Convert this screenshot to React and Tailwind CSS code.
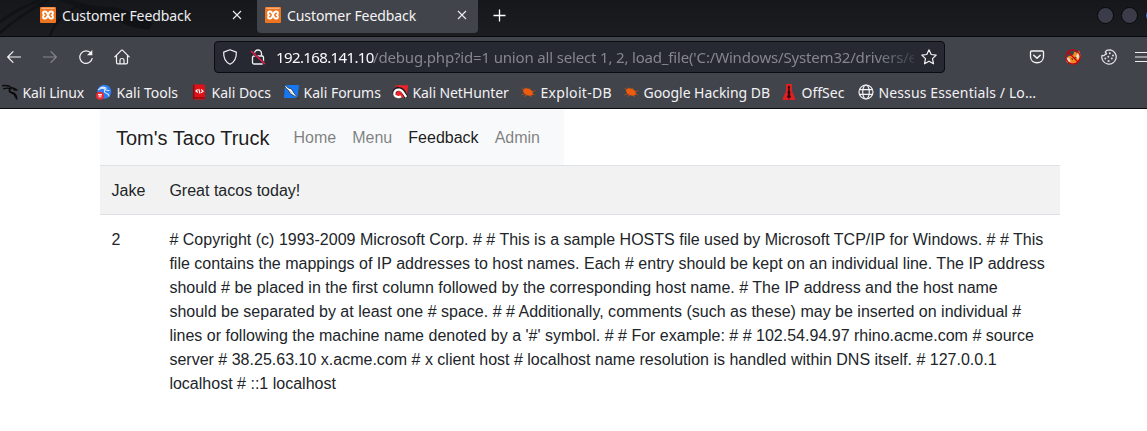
import React from "react";

const CHROME = "font-['Noto_Sans',sans-serif]";

function XamppIcon() {
  return (
    <svg width="16" height="16" viewBox="0 0 16 16" className="shrink-0">
      <rect width="16" height="16" rx="1" fill="#ee7420" />
      <path d="M1.500 1.200h13" stroke="#fbd0ad" strokeWidth=".9" />
      <path
        d="M6.700 5.400C5.500 3.900 3 4.200 3 6.100Q3 7.400 4.300 8 3 8.600 3 9.900c0 1.900 2.500 2.200 3.700.7L9.300 5.400C10.500 3.900 13 4.200 13 6.100q0 1.300-1.300 1.900Q13 8.600 13 9.900c0 1.900-2.500 2.200-3.700.7z"
        fill="none"
        stroke="#fff"
        strokeWidth="1.900"
        strokeLinejoin="round"
      />
    </svg>
  );
}

function CloseIcon() {
  return (
    <svg width="10" height="10" viewBox="0 0 10 10" fill="none" stroke="#eeeeef" strokeWidth="1.100">
      <path d="M1 1l8 8M9 1L1 9" />
    </svg>
  );
}

function KaliIcon() {
  return (
    <svg width="16" height="16" viewBox="0 0 16 16" className="shrink-0" fill="none" stroke="#0b0b0d" strokeLinecap="round" strokeLinejoin="round">
      <path d="M.6 1.800C4 1.200 7.200 1.700 9.500 3.800l3 .7 2.500 1.600-3.300-.3" strokeWidth="1.400" />
      <path d="M1.500 4.800C4.500 3.800 7 4 8.800 5" strokeWidth="1.100" />
      <path d="M9 4C6.500 5.800 7 8 9.800 8.700c2.800.6 4.500 2 4.800 6" strokeWidth="1.800" />
      <path d="M10 9.500c2 .5 3 2 3 3.500" strokeWidth="1" />
    </svg>
  );
}

function ToolsIcon() {
  return (
    <svg width="16" height="16" viewBox="0 0 16 16" className="shrink-0">
      <circle cx="8.300" cy="7.700" r="7" fill="#2c7ef5" />
      <path d="M2 6C5 3.500 8 4 10 6l3.500.8M9 5.500C7.500 8 9 9 11 9.500c1.500.5 2 1.500 2 3M4 4c3-1.500 5-1 6.500.5" fill="none" stroke="#d8e8ff" strokeWidth="1.100" />
      <circle cx="4" cy="11.800" r="4" fill="#ed2a32" />
      <path d="M2 10.500h4M3.200 10.500v3M4.900 10.500v3" stroke="#fff" strokeWidth=".9" />
    </svg>
  );
}

function DocsIcon() {
  return (
    <svg width="16" height="16" viewBox="0 0 16 16" className="shrink-0">
      <rect x="2" y=".5" width="12" height="15" rx=".8" fill="#dd1117" />
      <path d="M2.700 .8v14.500M2 13.800h12" stroke="#83070b" strokeWidth="1.200" />
      <path d="M6.700 5.500L4.900 7l2 1.500M10.100 5.500l2 1.700-2 1.500M7.800 5l1.200 4.500" fill="none" stroke="#fff" strokeWidth="1.100" />
    </svg>
  );
}

function ForumsIcon() {
  return (
    <svg width="16" height="16" viewBox="0 0 16 16" className="shrink-0">
      <path d="M2 1h14l-1.500 13H1z" fill="#1677f2" />
      <path d="M.3.800l3 1.400L5.500 4l3 1 2.500 4 4.500 5.800-4.800-3.300-3.700-2-1.500-3-2-1.800z" fill="#fff" stroke="#16202d" strokeWidth=".7" />
      <path d="M6 6.500l3 3" stroke="#777" strokeWidth=".7" />
    </svg>
  );
}

function NetHunterIcon() {
  return (
    <svg width="16" height="16" viewBox="0 0 16 16" className="shrink-0">
      <path d="M3.500 1.200H16L14.500 13.500H4z" fill="#ed252b" />
      <path d="M2.200 9.500C2.300 5 7.500 3.500 10.500 6.500c1.800 1.800 2.300 4.500 3.800 7" fill="none" stroke="#25181b" strokeWidth="4" />
      <path d="M9 12.300c-2 1.400-5.800 1-6.600-1.800C1.800 7.300 4.500 5.200 7.300 5.600c3.700.5 4.200 4.200 7 7.400" fill="none" stroke="#fff" strokeWidth="2.300" />
      <path d="M4 3.500L6 2.800" stroke="#211b1d" strokeWidth="1.300" />
    </svg>
  );
}

function ExploitIcon() {
  return (
    <svg width="16" height="16" viewBox="0 0 16 16" className="shrink-0">
      <ellipse cx="8" cy="8" rx="5.300" ry="3.300" transform="rotate(25 8 8)" fill="#ef5b0c" />
      <path d="M4 6L1.500 4.300M6 5L5 3.500M9.500 5l1-1.200M12 7.500l3.500-.7M12.500 10l2.500 1M10 11.500l2 1.300M5 9.500L1.500 11M7 11l-3 1.500" stroke="#c9540f" strokeWidth=".7" />
    </svg>
  );
}

function OffSecIcon() {
  return (
    <svg width="16" height="16" viewBox="0 0 16 16" className="shrink-0">
      <path d="M5 0h6v7l3.200 7.500L14 16H2l-.2-1.500L5 7z" fill="#df2022" />
      <path d="M8 1.500c1.500 1 1 2.500.4 3.500L9.500 9 8.700 10l1.500 3.500-2 .2V16h-.6v-2.300l-1.800-.2L7.200 10l-.7-1L7.400 5C6.500 4 6.500 2.500 8 1.500z" fill="#2b090d" />
    </svg>
  );
}

function GlobeIcon() {
  return (
    <svg width="16" height="16" viewBox="0 0 16 16" className="shrink-0" fill="none" stroke="#f2f2f4" strokeWidth="1.200">
      <circle cx="8" cy="8" r="7" />
      <ellipse cx="8" cy="8" rx="3.300" ry="7" />
      <path d="M1.300 5.700h13.400M1.300 10.300h13.400" />
    </svg>
  );
}

const bookmarks = [
  { label: "Kali Linux", Icon: KaliIcon, width: "w-[94px] tracking-[-0.150px]" },
  { label: "Kali Tools", Icon: ToolsIcon, width: "w-[95px]" },
  { label: "Kali Docs", Icon: DocsIcon, width: "w-[92px]" },
  { label: "Kali Forums", Icon: ForumsIcon, width: "w-[109px]" },
  { label: "Kali NetHunter", Icon: NetHunterIcon, width: "w-[128px] tracking-[-0.080px]" },
  { label: "Exploit-DB", Icon: ExploitIcon, width: "w-[103px] tracking-[0.300px]" },
  { label: "Google Hacking DB", Icon: ExploitIcon, width: "w-[158px] tracking-[-0.040px]" },
  { label: "OffSec", Icon: OffSecIcon, width: "w-[77px]" },
  { label: "Nessus Essentials / Lo…", Icon: GlobeIcon, width: "w-[190px] tracking-[0.120px]" },
];

function TabStrip() {
  return (
    <div className="relative flex h-9 w-full overflow-hidden bg-linear-to-b from-[#16171b] to-[#1c1d21]">
      <svg className="absolute left-0 top-0" width="170" height="36" viewBox="0 0 170 36" fill="none">
        <path d="M0 22C12 12 25 6 40 0M0 33C14 20 30 10 48 0M50 36C54 24 62 14 78 6M36 0l14 18" stroke="#111216" strokeWidth="2.500" />
        <path d="M72 0c18 7 32 6 46 8 12 3 20 8 35 15l-4 7c-10-2-20-3-28-8-10-2-24-1-34-8C80 8 72 5 60 0z" fill="#111216" />
      </svg>
      <div className="relative flex w-[257px] items-center pb-1.5 pl-10">
        <XamppIcon />
        <span className="ml-[6px] w-[170px] text-[14px] tracking-[-0.08px] text-[#eeeef0]">Customer Feedback</span>
        <CloseIcon />
      </div>
      <div className="relative flex h-[33px] w-[221px] items-center rounded-b-[4px] bg-[#42444b] pb-[3px] pl-2">
        <XamppIcon />
        <span className="ml-[6px] w-[170px] text-[14px] tracking-[-0.08px] text-[#f4f4f5]">Customer Feedback</span>
        <CloseIcon />
      </div>
      <div className="flex items-center pb-[5px] pl-[15px]">
        <svg width="13" height="13" viewBox="0 0 13 13" stroke="#fff" strokeWidth="1.300">
          <path d="M6.500 .5v12M.5 6.500h12" />
        </svg>
      </div>
      <div className="ml-auto -mr-[15px] flex items-center gap-[7px] pb-[6px]">
        <span className="size-[17px] rounded-full border border-[#07080a] bg-[#3a3d49]" />
        <span className="size-[17px] rounded-full border border-[#07080a] bg-[#3a3d49]" />
        <span className="size-[17px] rounded-full border border-[#07080a] bg-[#2077f6]" />
      </div>
    </div>
  );
}

function NavBar() {
  return (
    <div className="flex h-[41px] w-full items-center overflow-hidden border-t border-[#090a0c]">
      <div className="flex w-[214px] shrink-0 items-center pl-[7px]">
        <svg width="14" height="12" viewBox="0 0 14 12" fill="none" stroke="#f4f4f5" strokeWidth="1.200" strokeLinecap="round" strokeLinejoin="round">
          <path d="M13.500 6H.7M6 .7L.7 6 6 11.300" />
        </svg>
        <svg className="ml-[22px]" width="14" height="12" viewBox="0 0 14 12" fill="none" stroke="#85868b" strokeWidth="1.200" strokeLinecap="round" strokeLinejoin="round">
          <path d="M.5 6h12.800M8 .7L13.300 6 8 11.300" />
        </svg>
        <svg className="ml-[21px]" width="16" height="16" viewBox="0 0 16 16" fill="none" stroke="#f4f4f5" strokeWidth="1.200">
          <path d="M13 4.200A6.300 6.300 0 1 0 14.300 9" />
          <path d="M14.300 1v5.200H9z" fill="#f4f4f5" stroke="none" />
        </svg>
        <svg className="ml-[20px]" width="16" height="16" viewBox="0 0 16 16" fill="none" stroke="#f4f4f5" strokeWidth="1.200" strokeLinejoin="round" strokeLinecap="round">
          <path d="M.8 7.800L7.300 1.300q.7-.6 1.400 0l6.500 6.500M2.500 6.500v7q0 1.300 1.300 1.300h8.400q1.300 0 1.300-1.300v-7" />
          <path d="M6 14.500V11q0-1.500 2-1.500t2 1.500v3.500" />
        </svg>
      </div>
      <div className="flex h-8 w-[731px] shrink-0 items-center rounded-[4px] border border-[#0b0c10] bg-[#262832] pl-[7px]">
        <svg className="shrink-0" width="16" height="16" viewBox="0 0 16 16" fill="none" stroke="#f4f4f5" strokeWidth="1.200" strokeLinejoin="round">
          <path d="M8 .8l6.300 2.300c.3 5.500-1.200 9.700-6.300 12.100C2.900 12.800 1.400 8.600 1.700 3.100z" />
        </svg>
        <svg className="ml-[12px] shrink-0" width="16" height="16" viewBox="0 0 16 16" fill="none">
          <path d="M4.500 6.800V4.500a3.500 3.500 0 0 1 7 0v2.300" stroke="#f4f4f5" strokeWidth="1.300" />
          <rect x="2.500" y="7" width="11" height="8" rx="1.500" stroke="#f4f4f5" strokeWidth="1.300" />
          <path d="M1 2l14 13" stroke="#262832" strokeWidth="2.400" />
          <path d="M1 2l14 13" stroke="#e51a4c" strokeWidth="1.600" />
        </svg>
        <div className="ml-[10px] flex w-[638px] shrink-0 whitespace-pre mask-r-from-[600px] mask-r-to-[650px] text-[15px] tracking-[-0.17px] text-[#85868e]">
          <span className="w-[97px] tracking-[-0.62px] text-[#fbfbfe]">192.168.141.10</span>
          <span>/debug.php?id=1 union all select 1, 2, load_file('C:/Windows/System32/drivers/e</span>
        </div>
        <svg className="ml-[7px] shrink-0" width="16" height="16" viewBox="0 0 16 16" fill="none" stroke="#f4f4f5" strokeWidth="1.200" strokeLinejoin="round">
          <path d="M8 .8l2.200 4.700 5 .6-3.700 3.500 1 5.200L8 12.200l-4.500 2.600 1-5.200L.8 6.100l5-.6z" />
        </svg>
      </div>
      <div className="flex w-[240px] shrink-0 items-center pl-[84px]">
        <svg width="16" height="16" viewBox="0 0 16 16" fill="none" stroke="#f4f4f5" strokeWidth="1.300" strokeLinecap="round" strokeLinejoin="round">
          <path d="M2.500 2h11q1 0 1 1v4.500c0 8.300-13 8.300-13 0V3q0-1 1-1z" />
          <path d="M4.800 6.300L8 9.300l3.200-3" strokeWidth="1.500" />
        </svg>
        <svg className="ml-5" width="16" height="16" viewBox="0 0 16 16">
          <path d="M1.500 13L1 9.500 4 7l4-1 1.500-3.500L12 4l2-2.500 1.500 4.500-.5 4-3.500 3.500L7 15z" fill="#ef8b23" />
          <path d="M1.200 8.500l3 .5 1.500 3.500-3 1.500zM11 7l3-4.500.8 5.500-2 2.500z" fill="#e9dcc9" />
          <path d="M6 9l2 .8-.5 1.700zM9.500 8l2 .5-1.500 1.500z" fill="#4b2410" />
          <circle cx="8" cy="8" r="7.100" fill="none" stroke="#cd0008" strokeWidth="1.200" />
          <path d="M3 3l10 10" stroke="#cd0008" strokeWidth="1.200" />
        </svg>
        <svg className="ml-5" width="16" height="16" viewBox="0 0 16 16" fill="none" stroke="#dedee2" strokeWidth="1.300" strokeLinejoin="round">
          <path d="M5.500 4.200C3.500 3.500 4.500 2 6.500 1.200l3-.3A7.200 7.200 0 1 1 1 6.300c1.300.8 2.800.3 3-.9 1 .2 1.500-.4 1.500-1.200z" />
          <g fill="#dedee2" stroke="none">
            <circle cx="8.800" cy="4.300" r="1" />
            <circle cx="12" cy="6.500" r="1" />
            <circle cx="7.300" cy="7.800" r="1" />
            <circle cx="4.300" cy="9.500" r="1" />
            <circle cx="10.800" cy="9.600" r="1" />
            <circle cx="7.600" cy="12" r="1.100" />
          </g>
        </svg>
        <svg className="ml-[18px]" width="15" height="12" viewBox="0 0 15 12" stroke="#ededf0" strokeWidth="1.200">
          <path d="M0 1.500h15M0 6h15M0 10.500h15" />
        </svg>
      </div>
    </div>
  );
}

function BookmarksBar() {
  return (
    <div className="flex h-8 w-full items-center border-b border-[#090a0c] pl-[2px]">
      {bookmarks.map(({ label, Icon, width }) => (
        <div key={label} className={"flex shrink-0 items-center gap-[4.500px] pb-px " + width}>
          <Icon />
          <span className="whitespace-nowrap text-[14px] text-[#f2f2f4]">{label}</span>
        </div>
      ))}
    </div>
  );
}

function Feedback() {
  return (
    <main className="ml-[100px] w-[960px] font-['Liberation_Sans',sans-serif] text-base tracking-[0.008px] text-[#212529]">
      <nav className="flex h-14 w-[464px] items-center bg-[#f8f9fa] px-4 pt-px text-black/50">
        <span className="mr-4 whitespace-nowrap text-xl tracking-normal text-black/90">Tom's Taco Truck</span>
        <span className="px-2 pt-px">Home</span>
        <span className="px-2 pt-px">Menu</span>
        <span className="px-2 pt-px text-black/90">Feedback</span>
        <span className="px-2 pt-px">Admin</span>
      </nav>
      <div className="grid grid-cols-[57.400px_1fr] border-t border-[#dee2e6] bg-[#f2f2f2]">
        <div className="pb-[11px] pl-[11.600px] pt-[13px]">Jake</div>
        <div className="px-3 pb-[11px] pt-[13px]">Great tacos today!</div>
      </div>
      <div className="grid grid-cols-[57.400px_1fr] border-t border-[#dee2e6]">
        <div className="pb-[11px] pl-[11.600px] pt-[13px]">2</div>
        <div className="px-3 pb-[11px] pt-[13px]">
          # Copyright (c) 1993-2009 Microsoft Corp. # # This is a sample HOSTS file used by Microsoft TCP/IP for Windows. # # This file contains the mappings of IP addresses to host names. Each # entry should be kept on an individual line. The IP address should # be placed in the first column followed by the corresponding host name. # The IP address and the host name should be separated by at least one # space. # # Additionally, comments (such as these) may be inserted on individual # lines or following the machine name denoted by a '#' symbol. # # For example: # # 102.54.94.97 rhino.acme.com # source server # 38.25.63.10 x.acme.com # x client host # localhost name resolution is handled within DNS itself. # 127.0.0.1 localhost # ::1 localhost
        </div>
      </div>
    </main>
  );
}

export default function App() {
  return (
    <div className="h-[431px] w-[1147px] overflow-hidden bg-white">
      <header className={"w-full bg-[#42444b] " + CHROME}>
        <TabStrip />
        <NavBar />
        <BookmarksBar />
      </header>
      <Feedback />
    </div>
  );
}
